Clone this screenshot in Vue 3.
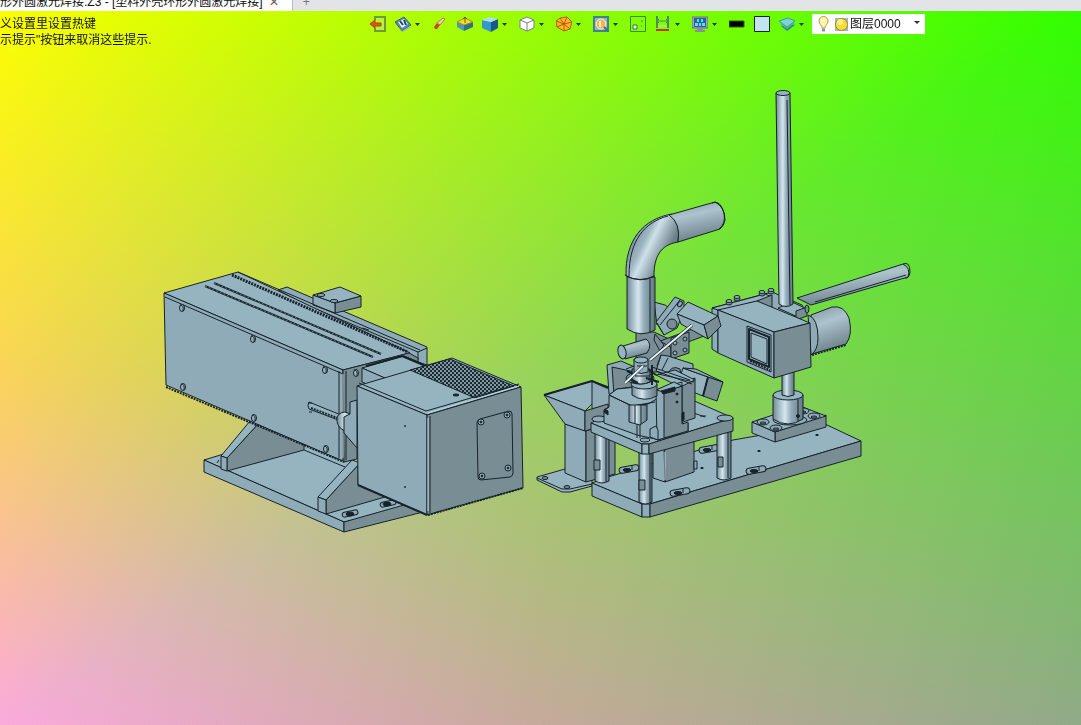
<template>
  <div class="cad-window">
    <nav class="tab-strip">
      <div class="tab active-tab">
        <span class="tab-title">{{ title }}</span>
        <button class="tab-close" aria-label="关闭">✕</button>
      </div>
      <button class="tab-add" aria-label="新建">+</button>
    </nav>

    <main class="viewport">
      <header class="viewport-header">
        <div class="hints">
          <p v-for="hint in hints" :key="hint">{{ hint }}</p>
        </div>

        <div class="toolbar">
          <button
            v-for="tool in tools"
            :key="tool.name"
            class="tool"
            :aria-label="tool.name"
          >
            <svg class="tool-icon" viewBox="0 0 16 16">
              <path
                v-for="(shape, index) in tool.shapes"
                :key="index"
                :d="shape.d"
                :fill="shape.fill || 'none'"
                :stroke="shape.stroke || 'none'"
                :stroke-width="shape.width || 1"
              />
            </svg>
            <svg v-if="tool.menu" class="tool-arrow" viewBox="0 0 12 16">
              <path d="M4 7h5l-2.500 3z" fill="#243a10" />
            </svg>
          </button>

          <label class="layer-box">
            <svg class="layer-icons" viewBox="0 0 36 20">
              <path d="M10 14c0-3-3-3.500-3-7a4 4 0 0 1 9 0c0 3.500-3 4-3 7z" fill="#fff6b4" stroke="#b79a35" />
              <path d="M10 14.500h3v3h-3z" fill="#8193a5" />
              <path d="M23 4h13v13h-13z" fill="#9fb5bd" />
              <circle cx="29.500" cy="10.500" r="6" fill="#ffdc32" stroke="#9c8c32" />
              <circle cx="28" cy="8" r="3" fill="#fff08a" />
            </svg>
            <select v-model="layer" aria-label="图层">
              <option>图层0000</option>
            </select>
            <svg class="tool-arrow" viewBox="0 0 12 16">
              <path d="M1 5h6l-3 3z" fill="#333" />
            </svg>
          </label>
        </div>
      </header>

      <svg class="model" viewBox="0 48 1081 677" role="img" aria-label="装配体">
        <defs>
          <linearGradient id="tube" x1="0" x2="1" y1="0" y2="0">
            <stop offset="0" stop-color="#6f8893" />
            <stop offset="0.2" stop-color="#a3bcc7" />
            <stop offset="0.4" stop-color="#d6e6ed" />
            <stop offset="0.6" stop-color="#94aeba" />
            <stop offset="1" stop-color="#627781" />
          </linearGradient>
          <linearGradient id="barrel" x1="0" x2="0.3" y1="0" y2="1">
            <stop offset="0" stop-color="#7f98a3" />
            <stop offset="0.4" stop-color="#adc3cd" />
            <stop offset="1" stop-color="#6d828b" />
          </linearGradient>
          <linearGradient id="bend" x1="0" x2="1" y1="0.200" y2="0.800">
            <stop offset="0.1" stop-color="#6f8893" />
            <stop offset="0.35" stop-color="#9fb7c2" />
            <stop offset="0.45" stop-color="#cfe0e8" />
            <stop offset="0.75" stop-color="#6a818b" />
          </linearGradient>
          <pattern id="mesh" width="4" height="4" patternUnits="userSpaceOnUse">
            <rect width="4" height="4" fill="#7f99a4" />
            <ellipse cx="1" cy="1" rx="1.200" ry="1" fill="#101c25" />
            <ellipse cx="3" cy="3" rx="1.200" ry="1" fill="#101c25" />
          </pattern>
        </defs>

        <!-- laser: base plate and gussets -->
        <g class="part">
          <path class="top" d="M204 460L250 446L304 440L420 490L417 506L344 522Z" />
          <path class="front" d="M204 460L344 522V532L204 472Z" />
          <path class="side" d="M344 522L404 505L427 508V511L344 532Z" />
          <path class="side" d="M227 458L258 424L304 444V450L227 471Z" />
          <path class="top" d="M221 456L250 421L258 424L227 458Z" />
          <path class="front" d="M221 456L227 458V471L221 469Z" />
          <path class="line" d="M304 450L345 467M219 460L217 463" />
          <path class="side" d="M326 500L358 465V485L385 497L326 514Z" />
          <path class="top" d="M318 497L352 460L360 463L326 500Z" />
          <path class="front" d="M318 497L326 500V514L318 511Z" />
          <rect class="front" x="342" y="511" width="16" height="5" rx="2.500" transform="rotate(-12 350 513)" />
          <ellipse class="dark" cx="350" cy="514" rx="4" ry="2" />
          <rect class="front" x="380" y="501" width="16" height="5" rx="2.500" transform="rotate(-12 388 503)" />
          <ellipse class="dark" cx="387" cy="504" rx="4" ry="2" />
        </g>

        <!-- laser: main housing -->
        <g class="part">
          <path class="front" d="M278 290L287 287L427 347V365L409 360Z" />
          <path class="line" d="M280 294L418 352L427 348M418 352V360" />
          <path class="side" d="M335 303L361 296V307L335 313Z" />
          <path class="front" d="M313 295L335 303V313L313 305Z" />
          <path class="top" d="M313 295L340 287L361 296L335 303Z" />
          <ellipse class="front" cx="321" cy="295" rx="4" ry="1.500" />
          <ellipse class="front" cx="334" cy="301" rx="4" ry="1.500" />
          <path class="top" d="M164 293L238 272L410 353L343 370Z" />
          <path class="front" d="M164 293L343 370V461L166 385Z" />
          <path class="side" d="M343 370L409 353L418 358V400L357 440V459L344 462Z" />
          <path class="line" d="M165 297L343 374M339 371V458M346 371V460" />
          <path class="highlight" d="M343 374V458" />
          <path class="slot" d="M214 283L381 354M205 286L373 357" />
          <path class="slot-fill" d="M214 283L381 354M205 286L373 357" />
          <path class="rail" d="M232 275L408 352" />
          <path class="line" d="M238 272L420 350M362 328L369 330" />
          <path class="dash" d="M166 387L344 462" />
          <g v-for="(screw, index) in housingScrews" :key="index">
            <ellipse class="top" :cx="screw[0]" :cy="screw[1]" rx="2.500" ry="3.500" />
            <path class="line" :d="`M${screw[0] - 2} ${screw[1] - 3}q4 0 3 6`" />
          </g>
          <path class="top" d="M362 368L404 356L431 367L400 385Z" />
          <path class="front" d="M362 368L385 378V392L362 382Z" />
          <path class="slot" d="M366 366L402 356L428 367" />
          <path class="top" d="M309 402L341 415V421L309 409Q307 405 309 402Z" />
          <path class="dash" d="M311 408L340 419" />
          <path class="line" d="M308 403H312M309 412H312" />
          <path d="M337 417Q341 410 348 413L357 416V434L343 430Q336 426 337 417Z" fill="url(#tube)" />
          <path class="front" d="M350 402L357 400V448L344 433V417L350 414Z" />
        </g>

        <!-- laser: ventilated head -->
        <g class="part">
          <path class="top" d="M357 386L452 358L521 387L427 415Z" />
          <path d="M410 370L450 359L514 386L475 398Z" fill="url(#mesh)" />
          <path class="front" d="M357 386L427 415V515L358 485Z" />
          <path class="side" d="M427 415L521 387L523 488L427 515Z" />
          <path class="line" d="M359 383L426 411L519 384M430 416V513" />
          <path class="highlight" d="M428 418V511M428 413L519 386" />
          <path class="slot" d="M358 485L427 515" />
          <path class="dash" d="M428 515L523 488" />
          <path class="side" d="M480 419L509 411Q512 411 512 414L513 473Q513 476 510 477L481 480Q478 480 478 477L477 423Q477 420 480 419Z" />
          <g v-for="(screw, index) in panelScrews" :key="index">
            <circle class="top" :cx="screw[0]" :cy="screw[1]" r="3" />
            <circle class="dark" :cx="screw[0]" :cy="screw[1]" r="1" />
          </g>
          <circle class="dark" cx="405" cy="426" r="0.500" />
          <circle class="dark" cx="405" cy="487" r="0.500" />
          <ellipse class="dark" cx="456" cy="395" rx="3" ry="1" />
        </g>

        <!-- hopper -->
        <g class="part">
          <path class="top" d="M537 477L565 469L592 480V486L570 492H562L537 480Z" />
          <path class="line" d="M537 478L562 489H570L592 484" />
          <ellipse class="side" cx="545" cy="478" rx="3" ry="1.500" />
          <ellipse class="side" cx="567" cy="487" rx="3" ry="1.500" />
          <path class="front" d="M565 424L586 431V482L565 473Z" />
          <path class="side" d="M586 431L594 428L615 435V474L586 482Z" />
          <path class="top" d="M544 395L592 381L608 388L585 411Z" />
          <path class="front" d="M592 381L612 388V404L592 409Z" />
          <path class="front" d="M544 395L585 411V431L565 424Z" />
          <path class="side" d="M585 411L608 404V420L595 428L585 431Z" />
          <path class="slot" d="M544 395L592 381L608 388" />
        </g>

        <!-- long base plate -->
        <g class="part">
          <path class="top" d="M592 483L608 477L733 440L825 424L861 441L650 504H642Z" />
          <path class="front" d="M592 483L642 504V517L592 496Z" />
          <path class="front" d="M642 504H650V517H642Z" />
          <path class="side" d="M650 504L861 441V456L650 517Z" />
          <g v-for="(slot, index) in baseSlots" :key="index">
            <rect class="front" :x="slot[0] - 10" :y="slot[1] - 3" width="20" height="6" rx="3" :transform="`rotate(-10 ${slot[0]} ${slot[1]})`" />
            <ellipse class="dark" :cx="slot[0] - 2" :cy="slot[1] + 1" rx="4" ry="1.500" />
            <path class="line" :d="`M${slot[0] + 3} ${slot[1] - 3}v4`" />
          </g>
          <ellipse class="dark" cx="759" cy="451" rx="1.500" ry="0.500" />
          <ellipse class="dark" cx="817" cy="435" rx="1.500" ry="0.500" />
          <ellipse class="dark" cx="702" cy="468" rx="1.500" ry="0.500" />
          <path class="side" d="M664 446L694 438V472L665 482Z" />
          <path class="front" d="M653 442L664 446L665 482L653 478Z" />
          <path class="highlight" d="M665 452V480" />
          <path class="front" d="M694 461H697V469H694Z" />
        </g>

        <!-- stand: column, arm and foot -->
        <g class="part">
          <path class="side" d="M775 432L826 415V427L775 442Z" />
          <path class="front" d="M752 422L775 432V442L752 433Z" />
          <path class="top" d="M752 422L800 406L826 416L775 432Z" />
          <ellipse v-for="(bolt, index) in footBolts" :key="index" class="front" :cx="bolt[0]" :cy="bolt[1]" rx="6" ry="3" />
          <ellipse v-for="(bolt, index) in footBolts" :key="index" class="side" :cx="bolt[0]" :cy="bolt[1] + 1" rx="3" ry="1" />
          <ellipse class="front" cx="790" cy="420" rx="17" ry="5" />
          <path d="M773 395V419Q788 429 803 419V395Z" fill="url(#tube)" />
          <ellipse class="top" cx="788" cy="395" rx="15" ry="5" />
          <path d="M782 370V395Q788 398 794 395V370Z" fill="url(#tube)" />
          <path class="line" d="M798 399V421" />
          <circle class="dark" cx="798" cy="416" r="1.500" />
          <path d="M797 298L903 264Q911 268 908 277L811 305Z" fill="url(#barrel)" />
          <path class="line" d="M815 302L906 275M903 264Q910 261 910 272Q909 279 905 278" />
          <path d="M811 315L832 307Q844 305 849 318Q853 335 846 344L812 354Z" fill="url(#barrel)" />
          <path class="dash" d="M812 355L846 345" />
          <path class="front" d="M808 315Q818 318 818 338Q818 350 811 355Z" />
        </g>

        <!-- stand: drive box -->
        <g class="part">
          <path class="front" d="M712 308L772 292L802 305L806 312L774 323Z" />
          <path class="top" d="M712 308L765 294L772 297L718 312Z" />
          <path class="side" d="M757 301L772 295V307L757 312Z" />
          <path class="top" d="M778 308L792 302L807 309L800 318Z" />
          <path class="side" d="M796 311L807 307V316L796 320Z" />
          <path d="M776 93L779 304Q786 309 793 304L790 93Z" fill="url(#tube)" />
          <path class="line" d="M787 100L790 305" />
          <ellipse class="top" cx="783" cy="93" rx="7" ry="2.500" />
          <path class="front" d="M712 308L718 310V353L712 349Z" />
          <path class="top" d="M718 310L757 301L810 323L774 332Z" />
          <path class="front" d="M718 310L774 332V378L718 353Z" />
          <path class="side" d="M774 332L810 323L811 367L774 378Z" />
          <path class="front" d="M747 326L771 335V372L747 362Z" />
          <path class="slot" d="M749 329L769 337V367L749 359Z" />
          <path class="top" d="M751 333L767 339V364L751 357Z" />
          <path class="dash" d="M750 361L770 370" />
          <g v-for="(bolt, index) in topBolts" :key="index">
            <ellipse class="side" :cx="bolt[0]" :cy="bolt[1] + 2" rx="3" ry="2" />
            <ellipse class="top" :cx="bolt[0]" :cy="bolt[1]" rx="3" ry="1.500" />
          </g>
          <ellipse class="side" cx="807" cy="309" rx="2" ry="4" />
        </g>

        <!-- table legs -->
        <g class="part">
          <path v-for="leg in legs" :key="leg.x" :d="legPath(leg)" fill="url(#tube)" />
          <path class="side" d="M594 460H600V470H594ZM639 480H645V490H639ZM718 457H723V467H718Z" />
          <path class="line" d="M606 435V482M650 454V503M728 432V478" />
        </g>

        <!-- table plate -->
        <g class="part">
          <path class="top" d="M591 423L606 415L690 399L733 418L649 444H642Z" />
          <path class="front" d="M591 423L642 444V454L591 432Z" />
          <path class="top" d="M642 444H649V454H642Z" />
          <path class="side" d="M649 444L733 418V431L649 454Z" />
          <ellipse class="front" cx="725" cy="418" rx="8" ry="3" />
          <ellipse class="front" cx="599" cy="419" rx="7" ry="3" />
          <ellipse class="front" cx="645" cy="440" rx="5" ry="2" />
          <path class="line" d="M688 411L705 417M700 416H706" />
        </g>

        <!-- cameras and their brackets -->
        <g class="part">
          <path class="front" d="M654 302L665 305L672 310L657 325Z" />
          <path class="side" d="M636 332H654L671 340V372H636Z" />
          <path class="side" d="M660 341L712 322V333L672 348Z" />
          <path class="side" d="M671 338L689 332V353L671 359Z" />
          <circle v-for="(hole, index) in bracketHoles" :key="index" class="front" :cx="hole[0]" :cy="hole[1]" r="2" />
          <path class="front" d="M656 322L675 297L684 301V311L677 328L664 335Z" />
          <path class="line" d="M660 325L680 300M657 323L664 335" />
          <circle class="side" cx="672" cy="324" r="5" />
          <ellipse class="front" cx="680" cy="304" rx="2" ry="3" transform="rotate(35 680 304)" />
          <path class="side" d="M655 334L664 345L660 351L654 340Z" />
          <path class="top" d="M677 314L688 302L718 316L704 325Z" />
          <path class="front" d="M677 314L704 325L708 339L681 324Z" />
          <path class="side" d="M704 325L718 316L721 326L708 339Z" />
          <path class="front" d="M656 371L661 355L668 356L693 364V373L680 380Z" />
          <path class="side" d="M667 376Q671 364 680 369L682 381Z" />
          <path class="line" d="M661 355L657 366M668 358L662 370" />
          <path class="top" d="M683 368L708 377L703 396L677 386Z" />
          <path class="side" d="M708 377L723 382L717 401L703 396Z" />
          <path class="front" d="M683 368L696 369L723 382L708 377Z" />
          <path class="slot" d="M708 377L703 396" />
        </g>

        <!-- welding fixture -->
        <g class="part">
          <path class="front" d="M607 365L621 361L637 368V386L618 397L609 394Z" />
          <path class="side" d="M612 367L635 372V389L614 395Z" />
          <path class="side" d="M678 383L695 378V418L680 423Z" />
          <path class="top" d="M656 375L675 370L695 380L680 387Z" />
          <path class="front" d="M604 423V410L609 407V395L617 389L632 387L660 397V440L637 435Z" />
          <path class="top" d="M609 395L617 389L637 387L660 397L648 404L632 406Z" />
          <path class="line" d="M609 395L632 406L655 402M609 407L604 410M637 424V438M640 424V438" />
          <path class="front" d="M656 390L664 387L682 382V426L688 423V432L657 440Z" />
          <path class="side" d="M664 391L682 386V424L688 422V431L664 438Z" />
          <path class="top" d="M656 390L674 382L682 386L664 392Z" />
          <path class="dark" d="M661 391L675 387V391L663 394Z" />
          <path class="front" d="M650 429L656 426L658 430V440L650 437Z" />
          <path class="dark" d="M682 413L684 412V420L682 421ZM605 409L608 411V415L604 412Z" />
          <circle class="dark" cx="677" cy="394" r="1" />
          <circle class="dark" cx="677" cy="402" r="1" />
          <path d="M629 405H647V420L640 425L629 422Z" fill="url(#tube)" />
          <path class="line" d="M635 405V423M641 405V424" />
          <path d="M632 384V395Q644 403 657 396V384Z" fill="url(#tube)" />
          <ellipse class="top" cx="644" cy="384" rx="13" ry="5" />
          <ellipse class="side" cx="640" cy="378" rx="14" ry="6" />
          <path d="M632 369V382Q641 386 650 382V369Z" fill="url(#tube)" />
          <path class="front" d="M634 359V372Q641 375 648 372V359Z" />
          <ellipse class="top" cx="641" cy="360" rx="7" ry="3" />
          <path class="slot" d="M627 371L636 375M628 378L638 383M649 370L656 375M646 378L659 382M652 365V385" />
          <path class="line" d="M652 367L690 380M656 371L692 384M626 369L634 366M658 374L694 382M637 366H647M635 376H650" />
          <path d="M623 346L646 339Q653 344 647 353L625 359Z" fill="url(#barrel)" />
          <ellipse class="top" cx="622" cy="352" rx="4" ry="7" transform="rotate(-12 622 352)" />
          <path class="beam-edge" d="M692 325L650 360M643 366L625 383" />
          <path class="beam" d="M692 325L650 360M643 366L625 383" />
        </g>

        <!-- suction pipe -->
        <g class="part">
          <path d="M627 277V329Q641 338 655 330V277Z" fill="url(#tube)" />
          <path d="M626 276C625 240 643 219 672 214Q681 225 678 242C660 245 654 257 654 276Q640 283 626 276Z" fill="url(#bend)" />
          <path d="M669 215L715 202Q725 207 725 220Q724 226 720 229L678 242Q681 223 669 215Z" fill="url(#barrel)" />
          <path class="line" d="M629 276C629 240 645 222 668 216M650 279V333M625 275Q640 284 655 276M712 203Q720 199 724 213Q726 224 719 229" />
        </g>
      </svg>
    </main>
  </div>
</template>

<script setup>
import { ref } from 'vue';

const title = '形外圆激光焊接.Z3 - [塑料外壳环形外圆激光焊接]';
const hints = ['义设置里设置热键', '示提示"按钮来取消这些提示.'];
const layer = ref('图层0000');

const tools = [
  {
    name: '退出',
    shapes: [
      { d: 'M5 4V1h10v14H5v-3', stroke: '#6f9a3e', width: 2 },
      { d: 'M6 3h7v10H6', stroke: '#c4e08f' },
      { d: 'M0 8l5-4v3h6v3H5v2z', fill: '#d9541e', stroke: '#b0401a' }
    ]
  },
  {
    name: '定位',
    menu: true,
    shapes: [
      { d: 'M0 6l9-5 7 8-9 6z', fill: '#5789a8', stroke: '#3b647f' },
      { d: 'M3 6l6-3 4 5-6 4z', fill: '#e5f3fa' },
      { d: 'M5 5l3 4M9 4l2 5', stroke: '#1c4773', width: 2 },
      { d: 'M1 9l6 6 8-5v2l-8 4z', fill: '#9bb6c7' }
    ]
  },
  {
    name: '画笔',
    shapes: [
      { d: 'M3 13l-1-2 3-4 3 2-3 4z', fill: '#c9442f' },
      { d: 'M5 7l6-5 2 1-5 6z', fill: '#f2d6b0', stroke: '#b57852' }
    ]
  },
  {
    name: '基准面',
    shapes: [
      { d: 'M0 6l7 3v6l-7-4z', fill: '#4a9ab8' },
      { d: 'M7 9l9-3v5l-9 4z', fill: '#2c708f' },
      { d: 'M0 6l8-4 8 4-9 3z', fill: '#f2dd32', stroke: '#a58a22' },
      { d: 'M8 7V1M6 3l2-2 2 2', stroke: '#7c5a1c' }
    ]
  },
  {
    name: '着色显示',
    menu: true,
    shapes: [
      { d: 'M0 4l9 2v10l-9-4z', fill: '#3697c9' },
      { d: 'M9 6l7-3v9l-7 4z', fill: '#155a8a' },
      { d: 'M0 4l7-3 9 2-7 3z', fill: '#a9dff0' }
    ]
  },
  {
    name: '线框显示',
    menu: true,
    shapes: [
      { d: 'M1 4l7-3 7 3v8l-7 3-7-3z', fill: '#fff', stroke: '#77808a' },
      { d: 'M1 4l7 3 7-3M8 7v8', stroke: '#77808a' }
    ]
  },
  {
    name: '剖面',
    menu: true,
    shapes: [
      { d: 'M4 2l7-1 5 5-2 7-6 2-7-4-1-6z', fill: '#ffb52b', stroke: '#b35c00' },
      { d: 'M8 8L4 2M8 8l3-7M8 8l8-2M8 8l6 5M8 8v7M8 8l-7 3M8 8L0 5', stroke: '#b35c00' }
    ]
  },
  {
    name: '缩放',
    menu: true,
    shapes: [
      { d: 'M1 1h14v14H1z', fill: '#91b9b7', stroke: '#3f8290', width: 2 },
      { d: 'M8 3a5 5 0 1 1 0 10a5 5 0 1 1 0-10', fill: '#f0b45a', stroke: '#f4f0d2' },
      { d: 'M6 5h2v6H6z', fill: '#fff2bd' },
      { d: 'M11 11l4 4', stroke: '#466b87', width: 2 }
    ]
  },
  {
    name: '局部',
    shapes: [
      { d: 'M.5 .5h15v15H.5z', stroke: '#3d8a2c' },
      { d: 'M3 9h4v4H3z', fill: '#e9fff6', stroke: '#277a58' },
      { d: 'M11 5h2M11 10h1', stroke: '#498f32' }
    ]
  },
  {
    name: '测量',
    menu: true,
    shapes: [
      { d: 'M2 0v12M13 0v12', stroke: '#4a8a65', width: 2 },
      { d: 'M2 5h11M4 3L2 5l2 2M11 3l2 2-2 2', stroke: '#4a8a65' },
      { d: 'M3 10h9', stroke: '#b8ec9f' },
      { d: 'M1 14h13', stroke: '#cc3311', width: 2 }
    ]
  },
  {
    name: '显示器',
    menu: true,
    shapes: [
      { d: 'M0 1h16v11H0z', fill: '#a2a4b5', stroke: '#706a8a' },
      { d: 'M2 2h12v9H2z', fill: '#23679a' },
      { d: 'M5 3h2v3H5zM9 3h2v3H9zM3 7h3v3H3zM7 7h2v3H7zM10 7h3v3h-3z', fill: '#5fdcec' },
      { d: 'M5 12h6v2h2v2H3v-2h2z', fill: '#8d8c9c' }
    ]
  },
  {
    name: '线宽',
    shapes: [{ d: 'M0 5h15v6H0z', fill: '#000', stroke: '#2c6500' }]
  },
  {
    name: '颜色',
    shapes: [{ d: 'M.5 .5h15v15H.5z', fill: '#c3e3ef', stroke: '#123' }]
  },
  {
    name: '图层管理',
    menu: true,
    shapes: [
      { d: 'M2 10l8-3 6 2-8 6z', fill: '#31887a' },
      { d: 'M1 8l8-3 7 2-8 6z', fill: '#4abca9' },
      { d: 'M0 5l9-3 7 3-8 6z', fill: '#7dd3d6', stroke: '#469c9a' }
    ]
  }
];

const housingScrews = [[182, 308], [253, 339], [325, 370], [183, 387], [254, 418], [326, 449], [356, 373]];
const panelScrews = [[481, 422], [507, 415], [482, 476], [508, 468]];
const baseSlots = [[629, 469], [680, 492], [709, 449], [756, 470]];
const bracketHoles = [[675, 343], [685, 339], [675, 353], [685, 350]];
const footBolts = [[763, 422], [776, 428], [803, 411], [814, 416]];
const topBolts = [[729, 301], [737, 297], [762, 292], [771, 290]];

const legs = [
  { x: 595, width: 14, top: 430, bottom: 481 },
  { x: 639, width: 13, top: 450, bottom: 502 },
  { x: 717, width: 14, top: 428, bottom: 478 }
];

const legPath = ({ x, width, top, bottom }) =>
  `M${x} ${top}V${bottom}q${width / 2} 4 ${width} 0V${top}Z`;
</script>

<style>
body {
  margin: 0;
}
</style>

<style scoped>
.cad-window {
  display: flex;
  flex-direction: column;
  min-height: 100vh;
  font-family: "Liberation Sans", "Noto Sans CJK SC", sans-serif;
  font-size: 12px;
  color: #111;
}

button {
  border: 0;
  padding: 0;
  background: none;
  font: inherit;
}

.tab-strip {
  display: flex;
  align-items: flex-end;
  height: 11px;
  overflow: hidden;
  background: #e2e4e8;
}

.tab {
  display: flex;
  align-items: center;
  gap: 5px;
  height: 18px;
  padding-right: 12px;
  background: #fff;
  border-right: 1px solid #b9bdc1;
  line-height: 16px;
  white-space: nowrap;
}

.tab-close {
  width: 12px;
  color: #705f45;
}

.tab-add {
  height: 18px;
  padding: 0 10px;
  color: #777;
}

/* four-corner blend: yellow and grey here, pink and green added on top */
.viewport {
  position: relative;
  isolation: isolate;
  flex: 1;
  display: flex;
  flex-direction: column;
  background: linear-gradient(to bottom right, #faff00, #000 50%, #91aa87);
}

.viewport::before,
.viewport::after {
  content: "";
  position: absolute;
  inset: 0;
  z-index: -1;
  mix-blend-mode: plus-lighter;
  background-blend-mode: darken;
}

.viewport::before {
  background-image:
    linear-gradient(to bottom, #000, #7d5558 50%, #faaadc),
    linear-gradient(to left, #000, #7d5558 50%, #faaadc);
}

.viewport::after {
  background-image:
    linear-gradient(to top, #000, #32ff00),
    linear-gradient(to right, #000, #32ff00);
}

.viewport-header {
  display: flex;
  height: 37px;
}

.hints {
  flex: 0 1 370px;
  padding-top: 5px;
  line-height: 16px;
  white-space: nowrap;
}

.hints p {
  margin: 0;
}

.toolbar {
  display: flex;
  align-items: center;
  gap: 9px;
  height: 20px;
  padding-top: 3px;
}

.tool {
  display: flex;
  align-items: center;
}

.tool-icon {
  width: 16px;
  height: 16px;
}

.tool-arrow {
  width: 12px;
  height: 16px;
}

.layer-box {
  display: flex;
  align-items: center;
  height: 20px;
  margin-left: -4px;
  background: #fff;
}

.layer-icons {
  width: 36px;
  height: 20px;
}

.layer-box select {
  appearance: none;
  width: 65px;
  border: 0;
  padding: 0 0 0 2px;
  background: none;
  font: inherit;
  color: inherit;
}

.model {
  flex: 1;
  display: block;
  width: 100%;
  min-height: 0;
}

.part {
  stroke: #16232b;
  stroke-width: 1;
  stroke-linejoin: round;
}

.top {
  fill: #96b4c0;
}

.front {
  fill: #8eabb7;
}

.side {
  fill: #788d94;
}

.dark {
  fill: #16232b;
}

.line {
  fill: none;
}

.highlight {
  fill: none;
  stroke: #bdd3dc;
}

.dash {
  fill: none;
  stroke-width: 2;
  stroke-dasharray: 2 1;
}

.slot {
  fill: none;
  stroke-width: 2;
}

.slot-fill {
  fill: none;
  stroke: #5d727c;
  stroke-width: 1;
  stroke-dasharray: 2 2;
}

.rail {
  fill: none;
  stroke-width: 3;
  stroke-dasharray: 2 1;
}

.beam-edge {
  fill: none;
  stroke-width: 3;
}

.beam {
  fill: none;
  stroke: #e6f0f4;
  stroke-width: 2;
}
</style>
